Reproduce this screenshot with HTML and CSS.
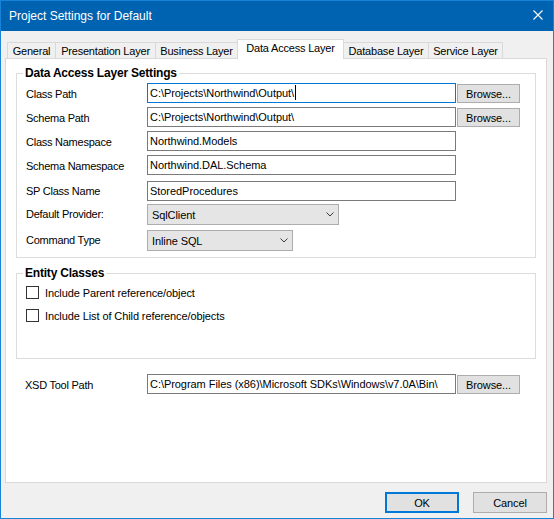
FILE: index.html
```html
<!DOCTYPE html>
<html>
<head>
<meta charset="utf-8">
<title>Project Settings for Default</title>
<link rel="stylesheet" href="styles.css">
</head>
<body>
<div class="window">
  <div class="titlebar">
    <span class="title">Project Settings for Default</span>
    <svg class="close" width="10" height="10" viewBox="0 0 10 10"><path d="M0.5 0.5L9.5 9.5M9.5 0.5L0.5 9.5" stroke="#fff" stroke-width="1.1" fill="none"/></svg>
  </div>
  <div class="client">
    <div class="tabs">
      <div class="tab t-general">General</div>
      <div class="tab t-presentation">Presentation Layer</div>
      <div class="tab t-business">Business Layer</div>
      <div class="tab t-dal active">Data Access Layer</div>
      <div class="tab t-database">Database Layer</div>
      <div class="tab t-service">Service Layer</div>
    </div>
    <div class="panel">
      <fieldset class="group g-dal">
        <legend>Data Access Layer Settings</legend>
        <div class="form">
          <div class="lbl">Class Path</div>
          <div class="tb focus">C:\Projects\Northwind\Output\<span class="caret"></span></div>
          <button class="btn browse">Browse...</button>

          <div class="lbl">Schema Path</div>
          <div class="tb">C:\Projects\Northwind\Output\</div>
          <button class="btn browse">Browse...</button>

          <div class="lbl">Class Namespace</div>
          <div class="tb">Northwind.Models</div>
          <div></div>

          <div class="lbl">Schema Namespace</div>
          <div class="tb">Northwind.DAL.Schema</div>
          <div></div>

          <div class="lbl mid">SP Class Name</div>
          <div class="tb">StoredProcedures</div>
          <div></div>

          <div class="lbl mid">Default Provider:</div>
          <div class="combo c-provider"><span>SqlClient</span><svg width="8" height="5" viewBox="0 0 8 5"><polyline points="0.5,0.5 4,4 7.5,0.5" fill="none" stroke="#3c3c3c" stroke-width="1"/></svg></div>
          <div></div>

          <div class="lbl mid">Command Type</div>
          <div class="combo c-command"><span>Inline SQL</span><svg width="8" height="5" viewBox="0 0 8 5"><polyline points="0.5,0.5 4,4 7.5,0.5" fill="none" stroke="#3c3c3c" stroke-width="1"/></svg></div>
          <div></div>
        </div>
      </fieldset>

      <fieldset class="group g-entity">
        <legend>Entity Classes</legend>
        <div class="checks">
          <div class="check"><span class="box"></span><span>Include Parent reference/object</span></div>
          <div class="check"><span class="box"></span><span>Include List of Child reference/objects</span></div>
        </div>
      </fieldset>

      <div class="xsd">
        <div class="lbl">XSD Tool Path</div>
        <div class="tb">C:\Program Files (x86)\Microsoft SDKs\Windows\v7.0A\Bin\</div>
        <button class="btn browse">Browse...</button>
      </div>
    </div>
    <div class="actions">
      <button class="btn dlg ok">OK</button>
      <button class="btn dlg">Cancel</button>
    </div>
  </div>
</div>
</body>
</html>
```

FILE: styles.css
```css
* { box-sizing: border-box; }
html, body { margin: 0; padding: 0; }
body {
  width: 554px;
  height: 519px;
  overflow: hidden;
  font-family: "Liberation Sans", Arial, sans-serif;
  font-size: 11px;
  letter-spacing: -0.1px;
  color: #000;
  background: #f0f0f0;
}
.window {
  width: 554px;
  height: 519px;
  border: 1px solid #1883d7;
  display: flex;
  flex-direction: column;
  background: #f0f0f0;
}
.titlebar {
  height: 30px;
  flex: none;
  background: #0063b1;
  color: #fff;
  display: flex;
  align-items: center;
  padding-left: 8px;
  font-size: 12px;
  letter-spacing: 0;
}
.title { flex: 1; }
.close { margin-right: 10px; margin-bottom: 2px; }

.client {
  flex: 1;
  display: flex;
  flex-direction: column;
  padding: 8px 6px 0 4px;
}
.tabs {
  display: flex;
  align-items: flex-end;
  height: 19px;
  padding-left: 2px;
}
.tab {
  height: 16px;
  border: 1px solid #d9d9d9;
  border-bottom: none;
  margin-left: -1px;
  background: #f0f0f0;
  text-align: center;
  line-height: 15px;
  padding-top: 1px;
  white-space: nowrap;
  letter-spacing: -0.2px;
}
.tab.t-general { margin-left: 0; width: 49px; }
.t-presentation { width: 101px; }
.t-business { width: 83px; }
.t-dal { width: 107px; }
.t-database { width: 86px; }
.t-service { width: 75px; }
.tab.active {
  height: 20px;
  background: #fff;
  margin-bottom: -1px;
  position: relative;
  z-index: 1;
  line-height: 16px;
  padding-top: 0;
}

.panel {
  height: 425px;
  border: 1px solid #d9d9d9;
  background: #fff;
  padding-top: 7px;
}
.group {
  margin: 0 10px 0 10px;
  padding: 0;
  border: 1px solid #dcdcdc;
  min-width: 0;
}
.group legend {
  margin-left: 6px;
  padding: 0 2px;
  font-weight: bold;
  font-size: 12px;
  line-height: 14px;
  letter-spacing: -0.2px;
}
.form {
  display: grid;
  grid-template-columns: 120px 309px 63px;
  grid-template-rows: 24px 24px 24px 26px 23px 26px 21px;
  column-gap: 1px;
  align-items: start;
  padding: 3px 0 6px 9px;
}
.lbl {
  line-height: 20px;
  padding-top: 1px;
  white-space: nowrap;
  letter-spacing: -0.25px;
}
.lbl.mid { padding-top: 0; }
.tb {
  height: 20px;
  border: 1px solid #7a7a7a;
  background: #fff;
  line-height: 18px;
  padding-left: 2px;
  white-space: nowrap;
  overflow: hidden;
  letter-spacing: -0.05px;
}
.tb.focus { border-color: #0078d7; }
.caret {
  display: inline-block;
  width: 1px;
  height: 15px;
  background: #000;
  vertical-align: -3px;
  margin-left: 1px;
}
.btn {
  font: inherit;
  letter-spacing: inherit;
  color: #000;
  background: #e1e1e1;
  border: 1px solid #adadad;
  padding: 0;
  margin: 0;
}
.browse {
  width: 63px;
  height: 19px;
  margin-top: 1px;
}
.combo {
  height: 21px;
  border: 1px solid #adadad;
  background: #e5e5e5;
  display: flex;
  align-items: center;
  justify-content: space-between;
  padding: 0 4px 0 4px;
}
.combo svg { margin-bottom: 1px; }
.c-provider { width: 192px; }
.c-command { width: 146px; }

.g-entity { margin-top: 8px; }
.checks {
  padding: 6px 0 36px 9px;
  display: flex;
  flex-direction: column;
  gap: 10px;
}
.check {
  display: flex;
  align-items: center;
  height: 13px;
}
.box {
  width: 13px;
  height: 13px;
  border: 1px solid #333;
  background: #fff;
  margin-right: 6px;
}

.xsd {
  display: grid;
  grid-template-columns: 121px 309px 63px;
  column-gap: 1px;
  align-items: start;
  margin-top: 15px;
  padding-left: 19px;
}

.actions {
  display: flex;
  justify-content: flex-end;
  gap: 14px;
  margin-top: 9px;
}
.dlg {
  width: 74px;
  height: 21px;
}
.dlg.ok { border: 2px solid #0078d7; }
```
